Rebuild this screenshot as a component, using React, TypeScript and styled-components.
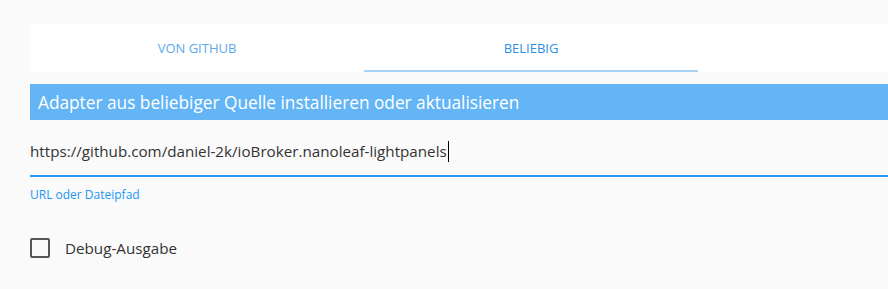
import React from "react";
import styled, { createGlobalStyle } from "styled-components";

const GlobalStyle = createGlobalStyle`
  html, body {
    margin: 0;
    padding: 0;
    background: #fafafa;
    overflow: hidden;
  }
  body {
    font-family: "Open Sans", "Noto Sans", sans-serif;
  }
`;

const Page = styled.div`
  width: 888px;
  height: 289px;
  padding: 24px 0 0 30px;
  box-sizing: border-box;
  overflow: hidden;
`;

const TabBar = styled.div`
  display: flex;
  height: 48px;
  background: #ffffff;
`;

const Tab = styled.div<{ $active?: boolean }>`
  width: 334px;
  flex: none;
  display: flex;
  align-items: center;
  justify-content: center;
  box-sizing: border-box;
  font-size: 13px;
  color: ${(p) => (p.$active ? "#2d8fe6" : "#5ea9ea")};
  border-bottom: 2px solid ${(p) => (p.$active ? "#a6d3f6" : "transparent")};
  padding-top: 2px;
`;

const Header = styled.div`
  margin-top: 12px;
  height: 36px;
  background: #64b5f6;
  color: #ffffff;
  font-size: 17.25px;
  display: flex;
  align-items: center;
  padding-left: 8px;
  white-space: nowrap;
`;

const Field = styled.div`
  margin-top: 20px;
  display: flex;
  flex-direction: column;
`;

const InputLine = styled.div`
  height: 37px;
  display: flex;
  align-items: center;
  font-size: 15.2px;
  color: #333333;
  border-bottom: 2px solid #2196f3;
  white-space: nowrap;
  padding-bottom: 13px;
  box-sizing: border-box;
`;

const Caret = styled.span`
  display: inline-block;
  width: 1px;
  height: 21px;
  background: #000000;
  margin-left: 1px;
`;

const HelperText = styled.div`
  margin-top: 9px;
  font-size: 12px;
  color: #2196f3;
`;

const CheckRow = styled.label`
  margin-top: 35px;
  display: flex;
  align-items: center;
  gap: 15px;
  font-size: 15.2px;
  color: #333333;
`;

const Box = styled.span`
  width: 20px;
  height: 20px;
  box-sizing: border-box;
  border: 2px solid #555555;
  border-radius: 2px;
  flex: none;
`;

export default function App() {
  return (
    <>
      <GlobalStyle />
      <Page>
        <TabBar>
          <Tab>VON GITHUB</Tab>
          <Tab $active>BELIEBIG</Tab>
        </TabBar>
        <Header>Adapter aus beliebiger Quelle installieren oder aktualisieren</Header>
        <Field>
          <InputLine>
            https://github.com/daniel-2k/ioBroker.nanoleaf-lightpanels
            <Caret />
          </InputLine>
          <HelperText>URL oder Dateipfad</HelperText>
        </Field>
        <CheckRow>
          <Box />
          Debug-Ausgabe
        </CheckRow>
      </Page>
    </>
  );
}
